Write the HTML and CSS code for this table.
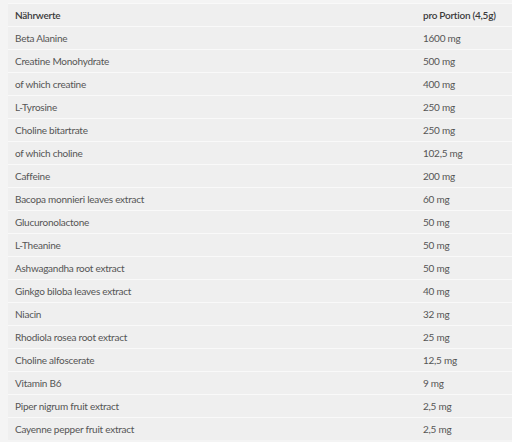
FILE: index.html
```html
<!DOCTYPE html>
<html lang="de">
<head>
<meta charset="utf-8">
<link rel="stylesheet" href="styles.css">
</head>
<body>
<div class="wrap">
<table class="nutri">
<thead>
<tr><th>Nährwerte</th><th>pro Portion (4,5g)</th></tr>
</thead>
<tbody>
<tr><td>Beta Alanine</td><td>1600 mg</td></tr>
<tr><td>Creatine Monohydrate</td><td>500 mg</td></tr>
<tr><td>of which creatine</td><td>400 mg</td></tr>
<tr><td>L-Tyrosine</td><td>250 mg</td></tr>
<tr><td>Choline bitartrate</td><td>250 mg</td></tr>
<tr><td>of which choline</td><td>102,5 mg</td></tr>
<tr><td>Caffeine</td><td>200 mg</td></tr>
<tr><td>Bacopa monnieri leaves extract</td><td>60 mg</td></tr>
<tr><td>Glucuronolactone</td><td>50 mg</td></tr>
<tr><td>L-Theanine</td><td>50 mg</td></tr>
<tr><td>Ashwagandha root extract</td><td>50 mg</td></tr>
<tr><td>Ginkgo biloba leaves extract</td><td>40 mg</td></tr>
<tr><td>Niacin</td><td>32 mg</td></tr>
<tr><td>Rhodiola rosea root extract</td><td>25 mg</td></tr>
<tr><td>Choline alfoscerate</td><td>12,5 mg</td></tr>
<tr><td>Vitamin B6</td><td>9 mg</td></tr>
<tr><td>Piper nigrum fruit extract</td><td>2,5 mg</td></tr>
<tr><td>Cayenne pepper fruit extract</td><td>2,5 mg</td></tr>
</tbody>
</table>
</div>
</body>
</html>
```
FILE: styles.css
```css
html, body {
  margin: 0;
  padding: 0;
  background: #f4f4f4;
}
.wrap {
  padding: 3px 0 0 8px;
  background: #f4f4f4;
}
.nutri {
  width: 100%;
  border-collapse: collapse;
  background: #efefef;
  font-family: Lato, "Open Sans", sans-serif;
  font-size: 10px;
  letter-spacing: -0.25px;
  color: #555;
}
.nutri th, .nutri td {
  border-top: 1px solid #f9f9f9;
  height: 22px;
  padding: 0 0 0 7px;
  text-align: left;
  vertical-align: middle;
  line-height: 13px;
  white-space: nowrap;
}
.nutri th {
  font-weight: 600;
  color: #3a3a3a;
}
.nutri th:last-child, .nutri td:last-child {
  width: 89px;
}
```
